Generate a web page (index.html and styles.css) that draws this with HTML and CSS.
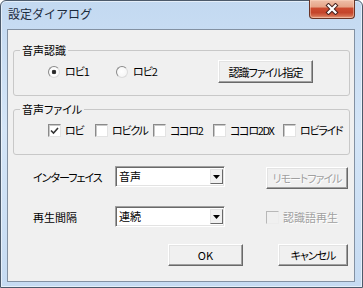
FILE: index.html
```html
<!DOCTYPE html>
<html lang="ja">
<head>
<meta charset="utf-8">
<title>設定ダイアログ</title>
<link rel="stylesheet" href="styles.css">
</head>
<body>
<div class="window">
  <div class="titlebar">
    <span class="title">設定ダイアログ</span>
    <button class="close" aria-label="閉じる">
      <svg width="14" height="12" viewBox="0 0 14 12">
        <path d="M3.5 2.5 L10.5 9.5 M10.5 2.5 L3.5 9.5" stroke="#4a2420" stroke-width="4.2" stroke-linecap="square"/>
        <path d="M3.5 2.5 L10.5 9.5 M10.5 2.5 L3.5 9.5" stroke="#ffffff" stroke-width="2.2" stroke-linecap="square"/>
      </svg>
    </button>
  </div>
  <div class="client">
    <fieldset class="group g1">
      <legend>音声認識</legend>
      <div class="radio-row">
        <label class="opt kana"><span class="radio on"></span>ロビ1</label>
        <label class="opt kana"><span class="radio"></span>ロビ2</label>
        <button class="btn btn-spec kana">認識ファイル指定</button>
      </div>
    </fieldset>
    <fieldset class="group g2">
      <legend>音声ファイル</legend>
      <div class="check-row">
        <label class="opt gap4 kana2"><span class="check on"><svg width="9" height="8" viewBox="0 0 9 8"><path d="M1 3.5 L3.5 6 L8 1" fill="none" stroke="#333" stroke-width="1.6"/></svg></span>ロビ</label>
        <label class="opt gap4 kana2"><span class="check"></span>ロビクル</label>
        <label class="opt gap4 kana2"><span class="check"></span>ココロ2</label>
        <label class="opt gap4 kana2"><span class="check"></span>ココロ2DX</label>
        <label class="opt gap4 kana2"><span class="check"></span>ロビライド</label>
      </div>
    </fieldset>
    <div class="form">
      <span class="lbl kana">インターフェイス</span>
      <div class="combo"><span class="combo-text">音声</span><span class="combo-arrow"><svg width="7" height="4" viewBox="0 0 7 4"><path d="M0 0 H7 L3.5 4 Z" fill="#000"/></svg></span></div>
      <span></span>
      <button class="btn btn-remote kana" disabled>リモートファイル</button>
      <span class="lbl">再生間隔</span>
      <div class="combo"><span class="combo-text">連続</span><span class="combo-arrow"><svg width="7" height="4" viewBox="0 0 7 4"><path d="M0 0 H7 L3.5 4 Z" fill="#000"/></svg></span></div>
      <span></span>
      <label class="opt gap4 disabled"><span class="check off"></span>認識語再生</label>
    </div>
    <div class="actions">
      <button class="btn btn-ok">OK</button>
      <button class="btn btn-cancel kana">キャンセル</button>
    </div>
  </div>
</div>
</body>
</html>
```

FILE: styles.css
```css
* { box-sizing: border-box; }
html, body { margin: 0; padding: 0; }
body {
  width: 363px;
  height: 288px;
  overflow: hidden;
  background: #ffffff;
  font-family: "Noto Sans CJK JP", "Noto Sans", sans-serif;
}
.window {
  width: 363px;
  height: 288px;
  border: 1px solid #4c5a6b;
  border-radius: 6px 6px 0 0;
  background: linear-gradient(180deg, #c3d9f1 0%, #d4e5f7 45%, #c6dbf2 100%);
  box-shadow: inset 0 0 0 1px rgba(255, 255, 255, 0.55);
  display: flex;
  flex-direction: column;
}
.titlebar {
  height: 28px;
  flex-shrink: 0;
  display: flex;
  align-items: flex-start;
}
.title {
  padding: 4px 0 0 7px;
  font-size: 12px;
  line-height: 17px;
  color: #1b2a3c;
}
.close {
  margin: -1px 7px 0 auto;
  width: 46px;
  height: 19px;
  padding: 0;
  border: 1px solid #6a3426;
  border-top: none;
  border-radius: 0 0 4px 4px;
  background: linear-gradient(180deg, #efbfa9 0%, #e6a488 38%, #cc4b30 46%, #c4442b 70%, #d36a4c 88%, #e6a285 100%);
  box-shadow: inset 0 0 0 1px rgba(255, 220, 200, 0.45);
  display: flex;
  align-items: center;
  justify-content: center;
}
.client {
  margin: 0 7px 0 6px;
  height: 253px;
  border: 1px solid #8391a2;
  background: #f0f0f0;
  font-size: 11px;
  line-height: 13px;
  font-feature-settings: "palt";
  color: #000;
}
.kana { letter-spacing: -1px; }
.kana2 { letter-spacing: -1.3px; }
.group {
  margin: 14px 4px 0 5px;
  padding: 3px 0 12px 0;
  border: 1px solid #c8c8c8;
  border-radius: 3px;
  min-width: 0;
}
.group legend {
  margin-left: 6px;
  padding: 0 2px;
  font-size: 11px;
  line-height: 13px;
}
.g2 {
  margin-top: 7px;
  padding: 8px 0 17px 0;
}
.radio-row {
  display: grid;
  grid-template-columns: 68px 102px 95px;
  align-items: center;
  padding-left: 34px;
  height: 23px;
}
.check-row {
  display: grid;
  grid-template-columns: 47px 58px 60px 70px auto;
  align-items: center;
  padding-left: 34px;
  height: 13px;
}
.opt {
  display: flex;
  align-items: center;
  gap: 5px;
  white-space: nowrap;
}
.gap4 { gap: 4px; }
.radio {
  width: 12px;
  height: 12px;
  border-radius: 50%;
  border: 1px solid;
  border-color: #8a8a8a #dcdcdc #dcdcdc #8a8a8a;
  background: radial-gradient(circle at 45% 45%, #ffffff 0%, #f2f2f2 100%);
  flex-shrink: 0;
}
.radio.on {
  background: radial-gradient(circle at 50% 50%, #1e1e1e 0, #3a3a3a 2px, #ffffff 2.6px, #f2f2f2 100%);
}
.check {
  width: 13px;
  height: 13px;
  border: 1px solid;
  border-color: #8a8a8a #e3e3e3 #e3e3e3 #8a8a8a;
  box-shadow: inset 1px 1px #c8c8c8;
  background: #ffffff;
  display: flex;
  align-items: center;
  justify-content: center;
  flex-shrink: 0;
}
.check.off {
  border-color: #b8b8b8 #ececec #ececec #b8b8b8;
  box-shadow: none;
  background: #f0f0f0;
}
.btn {
  font-family: inherit;
  font-size: 11px;
  font-feature-settings: "palt";
  height: 23px;
  padding: 0;
  color: #000;
  background: #f0f0f0;
  border: 1px solid;
  border-color: #ffffff #696969 #696969 #ffffff;
  box-shadow: inset -1px -1px #a0a0a0, inset 1px 1px #e3e3e3;
}
.btn-spec { width: 95px; }
.btn-remote {
  width: 82px;
  height: 22px;
  align-self: end;
  color: #a0a0a0;
  text-shadow: 1px 1px #ffffff;
}
.form {
  display: grid;
  grid-template-columns: 82px 110px 41px 82px;
  grid-auto-rows: 23px;
  row-gap: 17px;
  align-items: center;
  margin-top: 11px;
  padding-left: 25px;
}
.lbl { white-space: nowrap; }
.combo {
  align-self: start;
  height: 21px;
  display: flex;
  align-items: center;
  padding: 2px 1px 2px 2px;
  background: #ffffff;
  border: 1px solid;
  border-color: #a0a0a0 #ffffff #ffffff #a0a0a0;
  box-shadow: inset 1px 1px #696969, inset -1px -1px #e3e3e3;
}
.combo-text {
  flex: 1;
  padding-left: 1px;
}
.combo-arrow {
  width: 13px;
  height: 15px;
  background: #f0f0f0;
  border: 1px solid;
  border-color: #e3e3e3 #696969 #696969 #e3e3e3;
  display: flex;
  align-items: center;
  justify-content: center;
}
.disabled {
  color: #a0a0a0;
  text-shadow: 1px 1px #ffffff;
}
.actions {
  display: flex;
  justify-content: flex-end;
  gap: 35px;
  margin-top: 15px;
  padding-right: 6px;
}
.btn-ok { width: 75px; height: 22px; }
.btn-cancel { width: 70px; height: 22px; }
```
